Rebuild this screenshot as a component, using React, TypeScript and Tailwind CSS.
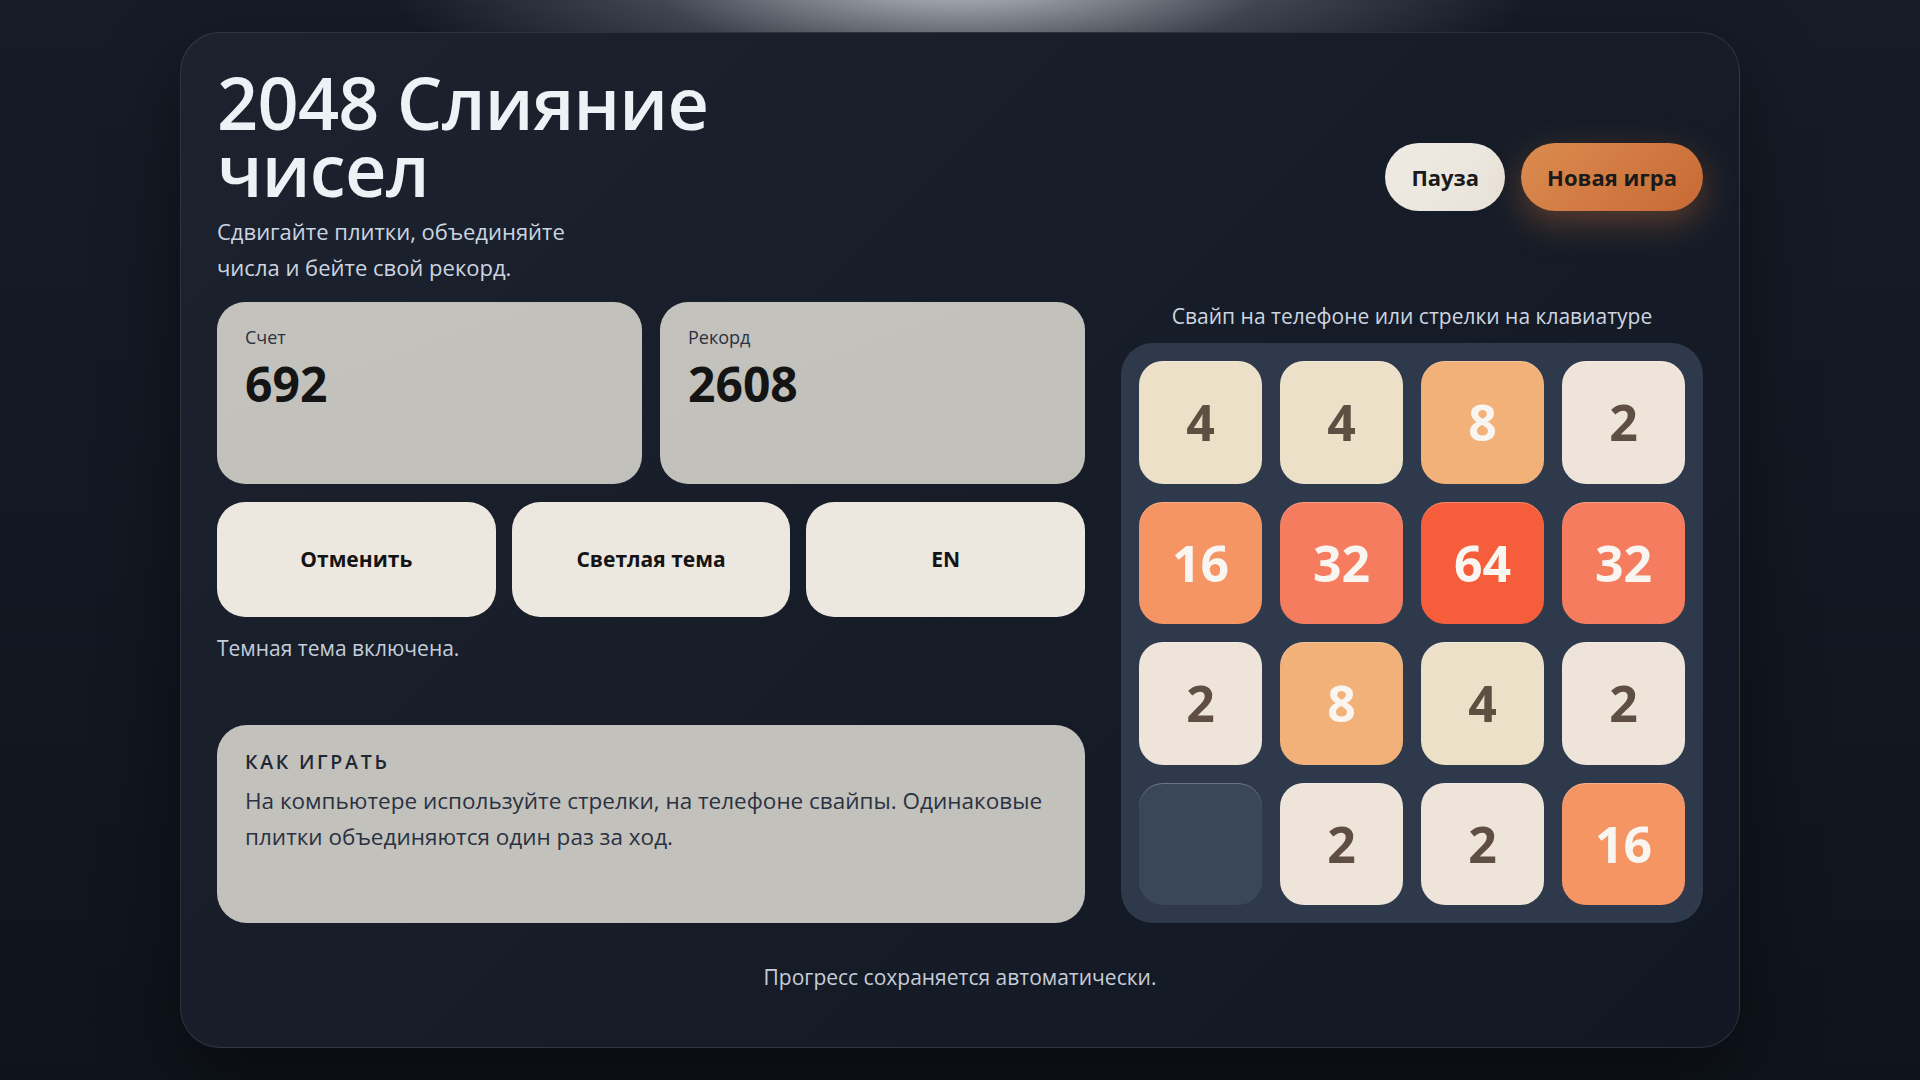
import React from 'react';

type Cell = number;

const board: Cell[][] = [
  [4, 4, 8, 2],
  [16, 32, 64, 32],
  [2, 8, 4, 2],
  [0, 2, 2, 16],
];

const tileStyles: Record<number, string> = {
  0: 'bg-[#3a4758]',
  2: 'bg-[#eee4da] text-[#5f4f43]',
  4: 'bg-[#ece0c8] text-[#5f4f43]',
  8: 'bg-[#f2b179] text-[#f9f6f2]',
  16: 'bg-[#f59563] text-[#f9f6f2]',
  32: 'bg-[#f57c5f] text-[#f9f6f2]',
  64: 'bg-[#f65e3b] text-[#f9f6f2]',
};

const Tile: React.FC<{ value: Cell }> = ({ value }) => (
  <div
    className={`flex items-center justify-center rounded-[24px] text-[50px] font-bold leading-none shadow-[inset_0_1px_0_rgba(255,255,255,0.25)] ${tileStyles[value]}`}
  >
    {value > 0 ? value : ''}
  </div>
);

const StatCard: React.FC<{ label: string; value: string }> = ({ label, value }) => (
  <div className="h-[182px] rounded-[28px] bg-[linear-gradient(160deg,#c4c2bd,#c2c0bb)] px-7 pt-[22px]">
    <div className="text-[18px] leading-[27px] text-[#283041]">{label}</div>
    <div className="mt-1 text-[48px] font-bold leading-[57px] text-[#141414]">{value}</div>
  </div>
);

export default function App() {
  return (
    <div className="min-h-screen bg-[radial-gradient(ellipse_700px_220px_at_50%_-30px,rgba(214,217,222,0.95),rgba(110,116,128,0.5)_45%,transparent_82%),linear-gradient(180deg,#161c27,#0f141c)] pt-8 font-['Open_Sans',sans-serif]">
      <div className="mx-auto w-[1560px] rounded-[40px] border border-white/10 bg-[linear-gradient(135deg,#1d232e_0%,#181e29_40%,#121823_100%)] px-9 pt-9 pb-[56px] shadow-[0_30px_80px_rgba(0,0,0,0.45)]">
        {/* Header */}
        <div className="flex items-center justify-between">
          <div>
            <h1 className="max-w-[560px] text-[72px] font-semibold leading-[67px] tracking-[-0.01em] text-[#edf2f7]">
              2048 Слияние чисел
            </h1>
            <p className="mt-[10px] max-w-[370px] text-[22px] leading-[36px] text-[#cbd5e1]">
              Сдвигайте плитки, объединяйте числа и бейте свой рекорд.
            </p>
          </div>
          <div className="flex items-center gap-4">
            <button className="h-[68px] rounded-full bg-[linear-gradient(135deg,#efebe4,#e8e2d9)] px-[26px] text-[22px] font-bold text-[#1a1a1a]">
              Пауза
            </button>
            <button className="h-[68px] rounded-full bg-[linear-gradient(135deg,#db8b4f,#c86a35)] px-[26px] text-[22px] font-bold text-[#1a1a1a] shadow-[0_12px_34px_rgba(214,120,60,0.35)]">
              Новая игра
            </button>
          </div>
        </div>

        {/* Main */}
        <div className="mt-[17px] grid grid-cols-[1fr_582px] gap-9">
          <div className="flex flex-col">
            <div className="grid grid-cols-2 gap-[18px]">
              <StatCard label="Счет" value="692" />
              <StatCard label="Рекорд" value="2608" />
            </div>
            <div className="mt-[18px] grid grid-cols-3 gap-4">
              {['Отменить', 'Светлая тема', 'EN'].map((label) => (
                <button
                  key={label}
                  className="h-[115px] rounded-[28px] bg-[#ece7df] text-[21px] font-bold text-[#141414]"
                >
                  {label}
                </button>
              ))}
            </div>
            <p className="mt-4 text-[21px] leading-[30px] text-[#c5cedb]">Темная тема включена.</p>

            <div className="mt-auto h-[198px] rounded-[30px] bg-[#c3c1bc] px-7 pt-[23px]">
              <h3 className="text-[19.5px] font-semibold uppercase leading-[27px] tracking-[0.14em] text-[#1f2634]">
                Как играть
              </h3>
              <p className="mt-2 text-[22.5px] leading-[36px] text-[#2a3242]">
                На компьютере используйте стрелки, на телефоне свайпы. Одинаковые плитки объединяются один раз за ход.
              </p>
            </div>
          </div>

          <div className="flex flex-col">
            <p className="text-center text-[21px] leading-[28px] text-[#cdd5e0]">
              Свайп на телефоне или стрелки на клавиатуре
            </p>
            <div className="mt-[13px] grid h-[580px] w-[582px] grid-cols-4 grid-rows-4 gap-[18px] rounded-[32px] bg-[#2e3a4b] p-[18px]">
              {board.flat().map((v, i) => (
                <Tile key={i} value={v} />
              ))}
            </div>
          </div>
        </div>

        {/* Footer */}
        <p className="mt-10 text-center text-[21px] leading-[28px] text-[#c5cdd9]">
          Прогресс сохраняется автоматически.
        </p>
      </div>
    </div>
  );
}
